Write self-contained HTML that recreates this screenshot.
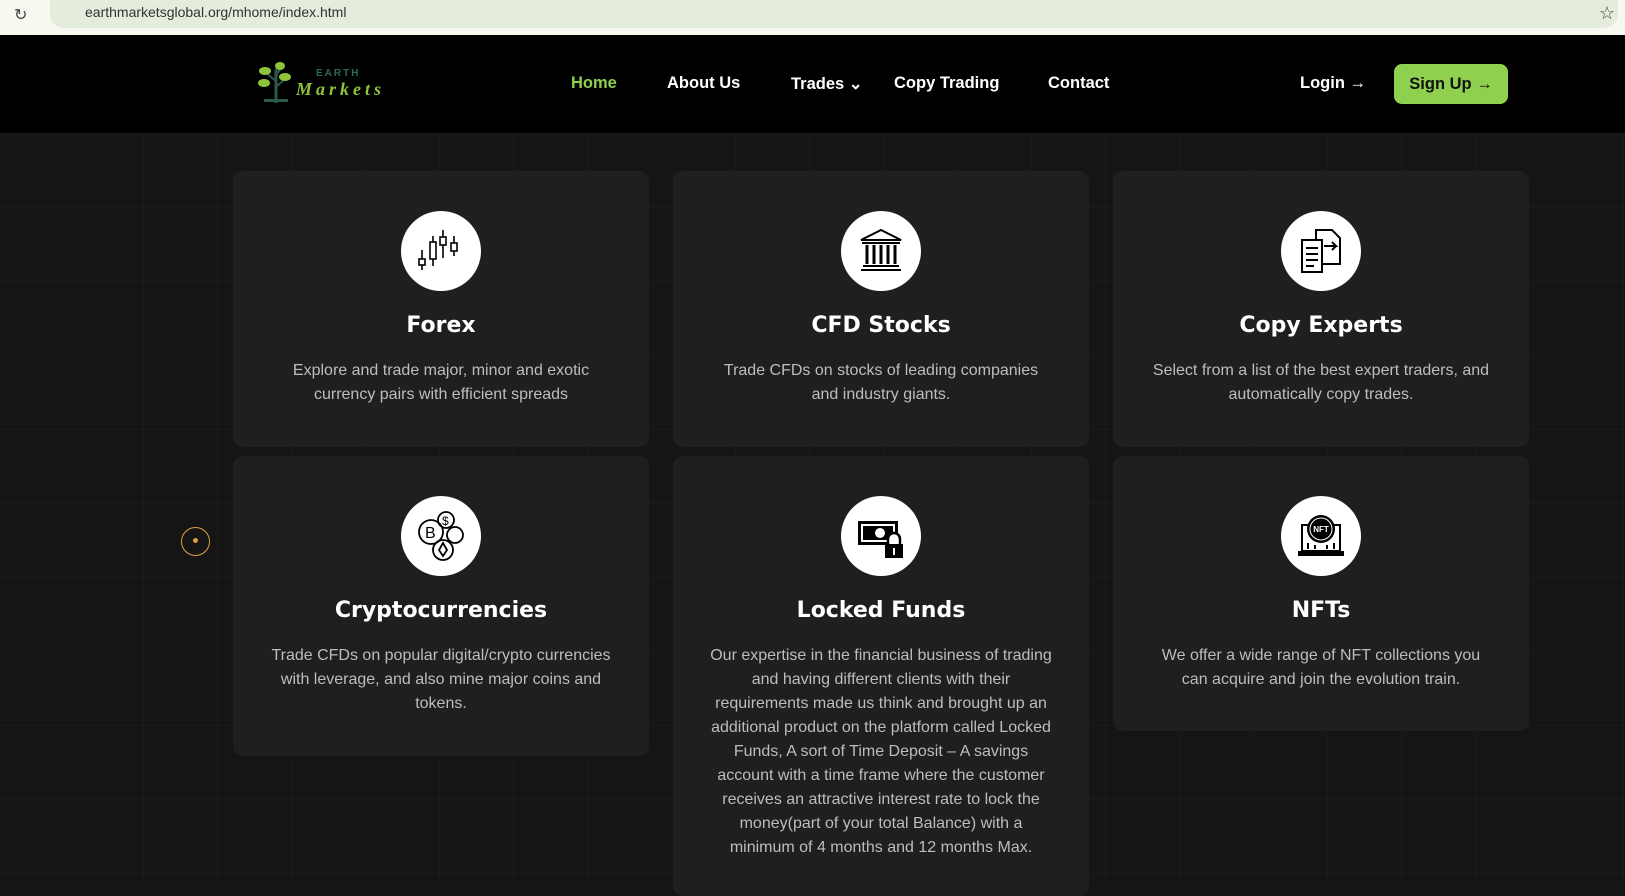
<!DOCTYPE html>
<html><head><meta charset="utf-8"><style>
*{margin:0;padding:0;box-sizing:border-box}
body{width:1625px;height:882px;overflow:hidden;background:#151515;font-family:"Liberation Sans",sans-serif;position:relative}
.bar{position:absolute;left:0;top:0;width:1625px;height:35px;background:#f7f9f1}
.url{position:absolute;left:50px;top:0;width:1568px;height:28px;background:#e4ecdb;border-radius:0 0 14px 14px}
.url span{position:absolute;left:35px;top:4px;font-size:14px;color:#333}
nav{position:absolute;left:0;top:35px;width:1625px;height:98px;background:#000}
.ni{position:absolute;top:39px;font-size:16.5px;font-weight:bold;color:#fff}
.su{position:absolute;left:1394px;top:29px;width:114px;height:40px;background:#8fd14f;border-radius:8px;color:#111;font-weight:bold;font-size:16.5px;text-align:center;line-height:40px}
.grid{position:absolute;left:0;top:133px;width:1625px;height:749px;background-image:linear-gradient(90deg,rgba(90,70,30,.11) 1px,transparent 1px),linear-gradient(rgba(90,70,30,.11) 1px,transparent 1px);background-size:74px 74px;background-position:-5px 0}
.card{position:absolute;background:#1f1f1f;border-radius:10px;text-align:center;color:#fff}
.ic{position:absolute;left:50%;margin-left:-40px;top:40px;width:80px;height:80px;border-radius:50%;background:#fff;display:flex;align-items:center;justify-content:center}
.card h3{position:absolute;left:0;right:0;top:142px;font-family:"DejaVu Sans","Liberation Sans",sans-serif;font-size:22px;font-weight:bold}
.card p{position:absolute;left:48px;right:48px;top:188px;font-size:16px;line-height:24px;color:#bdbdbd}
</style></head><body>
<div class="bar"><div style="position:absolute;left:14px;top:5px;font-size:16px;color:#444">↻</div><div class="url"><span>earthmarketsglobal.org/mhome/index.html</span></div><div style="position:absolute;right:10px;top:3px;font-size:18px;color:#444">☆</div></div>
<nav>
<svg style="position:absolute;left:256px;top:26px" width="40" height="44" viewBox="0 0 40 44"><path d="M20 42V8" stroke="#2b5a4a" stroke-width="3"/><path d="M20 20l-10-8M20 26l9-8M20 14l7-9" stroke="#2b5a4a" stroke-width="2"/><ellipse cx="9" cy="10" rx="6" ry="4" fill="#8fc43a"/><ellipse cx="29" cy="16" rx="6" ry="4" fill="#8fc43a"/><ellipse cx="24" cy="5" rx="5" ry="4" fill="#8fc43a"/><ellipse cx="8" cy="22" rx="6" ry="4" fill="#8fc43a"/><rect x="8" y="38" width="24" height="3" fill="#2b5a4a"/></svg>
<div style="position:absolute;left:316px;top:33px;font-size:10px;font-weight:bold;color:#2b6a5a;letter-spacing:2px">EARTH</div>
<div style="position:absolute;left:296px;top:44px;font-size:18px;font-style:italic;font-family:'Liberation Serif',serif;color:#8fc43a;letter-spacing:4px;font-weight:bold">Markets</div>
<div class="ni" style="left:571px;color:#8fd14f">Home</div>
<div class="ni" style="left:667px">About Us</div>
<div class="ni" style="left:791px">Trades ⌄</div>
<div class="ni" style="left:894px">Copy Trading</div>
<div class="ni" style="left:1048px">Contact</div>
<div class="ni" style="left:1300px">Login →</div>
<div class="su">Sign Up →</div>
</nav>
<div class="grid"></div>
<div style="position:absolute;left:181px;top:527px;width:29px;height:29px;border:1.5px solid #e0a040;border-radius:50%"><div style="position:absolute;left:11px;top:10px;width:5px;height:5px;background:#e0a040;border-radius:50%"></div></div>

<div class="card" style="left:233px;top:171px;width:416px;height:276px"><div class="ic"><svg width="50" height="50" viewBox="0 0 50 50" fill="none" stroke="#000" stroke-width="1.6"><path d="M6 24v20M17 10v30M27 4v28M38 10v20"/><rect x="3" y="33" width="6" height="6" fill="#fff"/><rect x="14" y="16" width="6" height="17" fill="#fff"/><rect x="24" y="11" width="6" height="8" fill="#fff"/><rect x="35" y="17" width="6" height="8" fill="#fff"/></svg></div><h3>Forex</h3><p>Explore and trade major, minor and exotic currency pairs with efficient spreads</p></div>
<div class="card" style="left:673px;top:171px;width:416px;height:276px"><div class="ic"><svg width="50" height="50" viewBox="0 0 50 50" fill="none" stroke="#000" stroke-width="2"><path d="M5 14L25 4l20 10z"/><path d="M6 17h38M7 40h36M5 44h40"/><path d="M11 19v19M18 19v19M25 19v19M32 19v19M39 19v19" stroke-width="3"/></svg></div><h3>CFD Stocks</h3><p>Trade CFDs on stocks of leading companies and industry giants.</p></div>
<div class="card" style="left:1113px;top:171px;width:416px;height:276px"><div class="ic"><svg width="50" height="50" viewBox="0 0 50 50" fill="none" stroke="#000" stroke-width="2"><path d="M20 4h16l8 8v26H20z"/><path d="M6 14h20v32H6z" fill="#fff"/><path d="M10 22h12M10 28h12M10 34h12M10 40h8M28 20h12l-4-4M40 20l-4 4"/></svg></div><h3>Copy Experts</h3><p style="left:36px;right:36px">Select from a list of the best expert traders, and automatically copy trades.</p></div>

<div class="card" style="left:233px;top:456px;width:416px;height:300px"><div class="ic"><svg width="52" height="52" viewBox="0 0 52 52" fill="none" stroke="#000" stroke-width="1.8"><circle cx="16" cy="22" r="12"/><circle cx="31" cy="10" r="8"/><circle cx="40" cy="25" r="8"/><circle cx="28" cy="40" r="10"/><text x="10" y="28" font-size="16" font-family="Liberation Sans" fill="#000" stroke="none">B</text><text x="27" y="15" font-size="12" font-family="Liberation Sans" fill="#000" stroke="none">$</text><path d="M28 33l-4 7 4 6 4-6z"/></svg></div><h3>Cryptocurrencies</h3><p style="left:38px;right:38px">Trade CFDs on popular digital/crypto currencies with leverage, and also mine major coins and tokens.</p></div>
<div class="card" style="left:673px;top:456px;width:416px;height:440px"><div class="ic"><svg width="50" height="50" viewBox="0 0 50 50"><rect x="2" y="10" width="40" height="24" fill="#000"/><rect x="5" y="13" width="34" height="18" fill="#fff"/><rect x="7" y="15" width="30" height="14" fill="#000"/><circle cx="24" cy="22" r="5" fill="#fff"/><path d="M32 34v-6a6 6 0 0 1 12 0v6" stroke="#000" stroke-width="2.5" fill="#fff"/><rect x="29" y="33" width="18" height="14" fill="#000"/><rect x="37" y="37" width="2" height="7" fill="#fff"/></svg></div><h3>Locked Funds</h3><p style="left:36px;right:36px">Our expertise in the financial business of trading and having different clients with their requirements made us think and brought up an additional product on the platform called Locked Funds, A sort of Time Deposit – A savings account with a time frame where the customer receives an attractive interest rate to lock the money(part of your total Balance) with a minimum of 4 months and 12 months Max.</p></div>
<div class="card" style="left:1113px;top:456px;width:416px;height:275px"><div class="ic"><svg width="50" height="50" viewBox="0 0 50 50"><rect x="6" y="14" width="38" height="26" fill="none" stroke="#000" stroke-width="2"/><rect x="2" y="40" width="46" height="5" fill="#000"/><circle cx="25" cy="18" r="14" fill="#000"/><circle cx="25" cy="18" r="11" fill="none" stroke="#fff" stroke-width="1"/><text x="25" y="21" text-anchor="middle" font-size="8" font-weight="bold" font-family="Liberation Sans" fill="#fff">NFT</text><path d="M12 32v6M19 34v4M31 34v4M38 32v6" stroke="#000" stroke-width="2"/></svg></div><h3>NFTs</h3><p>We offer a wide range of NFT collections you can acquire and join the evolution train.</p></div>
</body></html>
